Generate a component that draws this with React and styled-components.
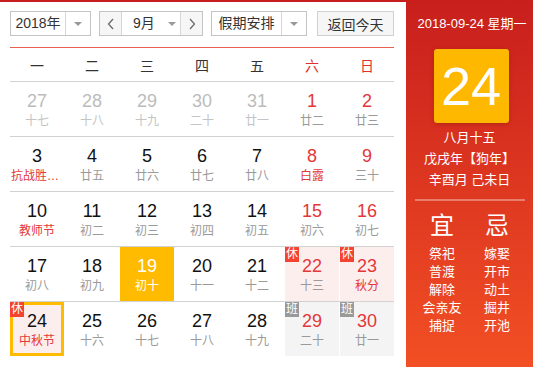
import React from "react";
import styled, { createGlobalStyle, css } from "styled-components";

const GlobalStyle = createGlobalStyle`
  body {
    margin: 0;
    background: #fff;
    font-family: "Liberation Sans", "Noto Sans CJK SC", sans-serif;
  }
`;

const Wrapper = styled.div`
  display: flex;
  width: 533px;
  height: 367px;
  overflow: hidden;
`;

const Main = styled.div`
  width: 406px;
  box-sizing: border-box;
  padding: 9px 12px 0 10px;
  border-top: 2px solid #c81f1e;
`;

const Toolbar = styled.div`
  display: flex;
  align-items: center;
  height: 25px;
  padding-bottom: 11px;
  border-bottom: 1px solid #e8604f;
`;

const SelectBox = styled.div`
  display: flex;
  height: 25px;
  box-sizing: border-box;
  border: 1px solid #c4c4c4;
  margin-right: ${props => props.mr || 0}px;
  font-size: 14px;
  color: #333;
`;

const SelectLabel = styled.div`
  width: ${props => props.w}px;
  display: flex;
  align-items: center;
  justify-content: center;
  line-height: 23px;
`;

const SelectArrow = styled.div`
  width: 24px;
  border-left: 1px solid #d6d6d6;
  display: flex;
  align-items: center;
  justify-content: center;

  &::after {
    content: "";
    border-left: 4px solid transparent;
    border-right: 4px solid transparent;
    border-top: 4px solid #999;
  }
`;

const MonthLabel = styled.div`
  width: 58px;
  display: flex;
  align-items: center;
  padding-left: 11px;
  box-sizing: border-box;
  line-height: 23px;

  &::after {
    content: "";
    margin-left: 13px;
    border-left: 4px solid transparent;
    border-right: 4px solid transparent;
    border-top: 4px solid #999;
  }
`;

const StepButton = styled.div`
  width: 21px;
  display: flex;
  align-items: center;
  justify-content: center;
  background: #f6f6f6;
  ${props =>
    props.side === "left"
      ? css`border-right: 1px solid #d6d6d6;`
      : css`border-left: 1px solid #d6d6d6;`}
`;

const TodayButton = styled.div`
  width: 81px;
  height: 25px;
  box-sizing: border-box;
  border: 1px solid #d0d0d0;
  background: #f6f6f6;
  font-size: 14px;
  color: #333;
  display: flex;
  align-items: center;
  justify-content: center;
`;

const WeekHeader = styled.div`
  display: grid;
  grid-template-columns: repeat(7, 54px);
  column-gap: 1px;
  height: 33px;
  align-items: center;
`;

const WeekDay = styled.div`
  text-align: center;
  font-size: 14px;
  color: ${props => (props.weekend ? "#e0302b" : "#333")};
`;

const Row = styled.div`
  display: grid;
  grid-template-columns: repeat(7, 54px);
  column-gap: 1px;
  border-top: 1px solid #d2d2d2;
`;

const Cell = styled.div`
  position: relative;
  height: 54px;
  box-sizing: border-box;
  display: flex;
  flex-direction: column;
  align-items: center;
  padding-top: 9px;
  background: ${props =>
    props.active ? "#ffbb00" : props.rest ? "#fdeeee" : props.work ? "#f4f4f4" : "#fff"};
  ${props =>
    props.today &&
    css`
      border: 3px solid #ffbb00;
      padding-top: 6px;
    `}
`;

const DayNum = styled.div`
  font-size: 18px;
  line-height: 20px;
  color: ${props =>
    props.active ? "#fff" : props.other ? "#bcbcbc" : props.weekend ? "#e3373a" : "#111"};
`;

const Lunar = styled.div`
  margin-top: 2px;
  max-width: 52px;
  font-size: 12px;
  line-height: 16px;
  white-space: nowrap;
  overflow: hidden;
  text-overflow: ellipsis;
  color: ${props =>
    props.active ? "#fff" : props.other ? "#c4c4c4" : props.fest ? "#e3373a" : "#9a9a9a"};
`;

const Badge = styled.span`
  position: absolute;
  top: ${props => (props.inset ? -3 : 0)}px;
  left: ${props => (props.inset ? -3 : 0)}px;
  width: 14px;
  height: 15px;
  line-height: 15px;
  font-size: 12px;
  text-align: center;
  color: #fff;
  background: ${props => (props.kind === "work" ? "#999" : "#f4432f")};
`;

const Side = styled.div`
  width: 127px;
  height: 367px;
  background: linear-gradient(to bottom, #c81f1d, #f24f24);
  color: #fff;
  display: flex;
  flex-direction: column;
  align-items: center;
  padding-top: 15px;
  box-sizing: border-box;
`;

const SideDate = styled.div`
  font-size: 13px;
  line-height: 18px;
  white-space: nowrap;
  padding-left: 5px;
`;

const BigDay = styled.div`
  margin-top: 16px;
  width: 75px;
  height: 74px;
  border-radius: 3px;
  background: #ffb800;
  box-shadow: 0 1px 4px rgba(120, 20, 0, 0.35);
  font-size: 54px;
  line-height: 74px;
  text-align: center;
  margin-left: 3px;
`;

const LunarInfo = styled.div`
  margin-top: 4px;
  font-size: 13px;
  line-height: 21px;
  text-align: center;
`;

const Divider = styled.div`
  margin-top: 9px;
  width: 110px;
  height: 2px;
  background: rgba(255, 255, 255, 0.35);
`;

const Almanac = styled.div`
  margin-top: 11px;
  display: grid;
  grid-template-columns: 55px 55px;
  text-align: center;
`;

const AlmanacTitle = styled.div`
  font-size: 24px;
  line-height: 28px;
  margin-bottom: 5px;
`;

const AlmanacItem = styled.div`
  font-size: 13px;
  line-height: 18px;
`;

const Chevron = ({ dir }) => (
  <svg width="8" height="12" viewBox="0 0 8 12">
    <polyline
      points={dir === "left" ? "6,1 1.5,6 6,11" : "2,1 6.5,6 2,11"}
      fill="none"
      stroke="#666"
      strokeWidth="1.2"
    />
  </svg>
);

const weeks = ["一", "二", "三", "四", "五", "六", "日"];

const rows = [
  [
    { d: 27, l: "十七", other: true },
    { d: 28, l: "十八", other: true },
    { d: 29, l: "十九", other: true },
    { d: 30, l: "二十", other: true },
    { d: 31, l: "廿一", other: true },
    { d: 1, l: "廿二" },
    { d: 2, l: "廿三" },
  ],
  [
    { d: 3, l: "抗战胜利纪念日", fest: true },
    { d: 4, l: "廿五" },
    { d: 5, l: "廿六" },
    { d: 6, l: "廿七" },
    { d: 7, l: "廿八" },
    { d: 8, l: "白露", fest: true },
    { d: 9, l: "三十" },
  ],
  [
    { d: 10, l: "教师节", fest: true },
    { d: 11, l: "初二" },
    { d: 12, l: "初三" },
    { d: 13, l: "初四" },
    { d: 14, l: "初五" },
    { d: 15, l: "初六" },
    { d: 16, l: "初七" },
  ],
  [
    { d: 17, l: "初八" },
    { d: 18, l: "初九" },
    { d: 19, l: "初十", active: true },
    { d: 20, l: "十一" },
    { d: 21, l: "十二" },
    { d: 22, l: "十三", rest: true },
    { d: 23, l: "秋分", rest: true, fest: true },
  ],
  [
    { d: 24, l: "中秋节", rest: true, fest: true, today: true },
    { d: 25, l: "十六" },
    { d: 26, l: "十七" },
    { d: 27, l: "十八" },
    { d: 28, l: "十九" },
    { d: 29, l: "二十", work: true },
    { d: 30, l: "廿一", work: true },
  ],
];

const good = ["祭祀", "普渡", "解除", "会亲友", "捕捉"];
const bad = ["嫁娶", "开市", "动土", "掘井", "开池"];

export default function App() {
  return (
    <Wrapper>
      <GlobalStyle />
      <Main>
        <Toolbar>
          <SelectBox mr={8}>
            <SelectLabel w={54}>2018年</SelectLabel>
            <SelectArrow />
          </SelectBox>
          <SelectBox mr={8}>
            <StepButton side="left">
              <Chevron dir="left" />
            </StepButton>
            <MonthLabel>9月</MonthLabel>
            <StepButton side="right">
              <Chevron dir="right" />
            </StepButton>
          </SelectBox>
          <SelectBox mr={10}>
            <SelectLabel w={69}>假期安排</SelectLabel>
            <SelectArrow />
          </SelectBox>
          <TodayButton>返回今天</TodayButton>
        </Toolbar>
        <WeekHeader>
          {weeks.map((w, i) => (
            <WeekDay key={w} weekend={i > 4}>
              {w}
            </WeekDay>
          ))}
        </WeekHeader>
        {rows.map((row, ri) => (
          <Row key={ri}>
            {row.map((c, ci) => (
              <Cell
                key={ci}
                active={c.active}
                rest={c.rest}
                work={c.work}
                today={c.today}
              >
                {c.rest && <Badge inset={c.today}>休</Badge>}
                {c.work && <Badge kind="work">班</Badge>}
                <DayNum active={c.active} other={c.other} weekend={ci > 4}>
                  {c.d}
                </DayNum>
                <Lunar active={c.active} other={c.other} fest={c.fest}>
                  {c.l}
                </Lunar>
              </Cell>
            ))}
          </Row>
        ))}
      </Main>
      <Side>
        <SideDate>2018-09-24 星期一</SideDate>
        <BigDay>24</BigDay>
        <LunarInfo>
          八月十五
          <br />
          戊戌年【狗年】
          <br />
          辛酉月 己未日
        </LunarInfo>
        <Divider />
        <Almanac>
          <div>
            <AlmanacTitle>宜</AlmanacTitle>
            {good.map(g => (
              <AlmanacItem key={g}>{g}</AlmanacItem>
            ))}
          </div>
          <div>
            <AlmanacTitle>忌</AlmanacTitle>
            {bad.map(b => (
              <AlmanacItem key={b}>{b}</AlmanacItem>
            ))}
          </div>
        </Almanac>
      </Side>
    </Wrapper>
  );
}
